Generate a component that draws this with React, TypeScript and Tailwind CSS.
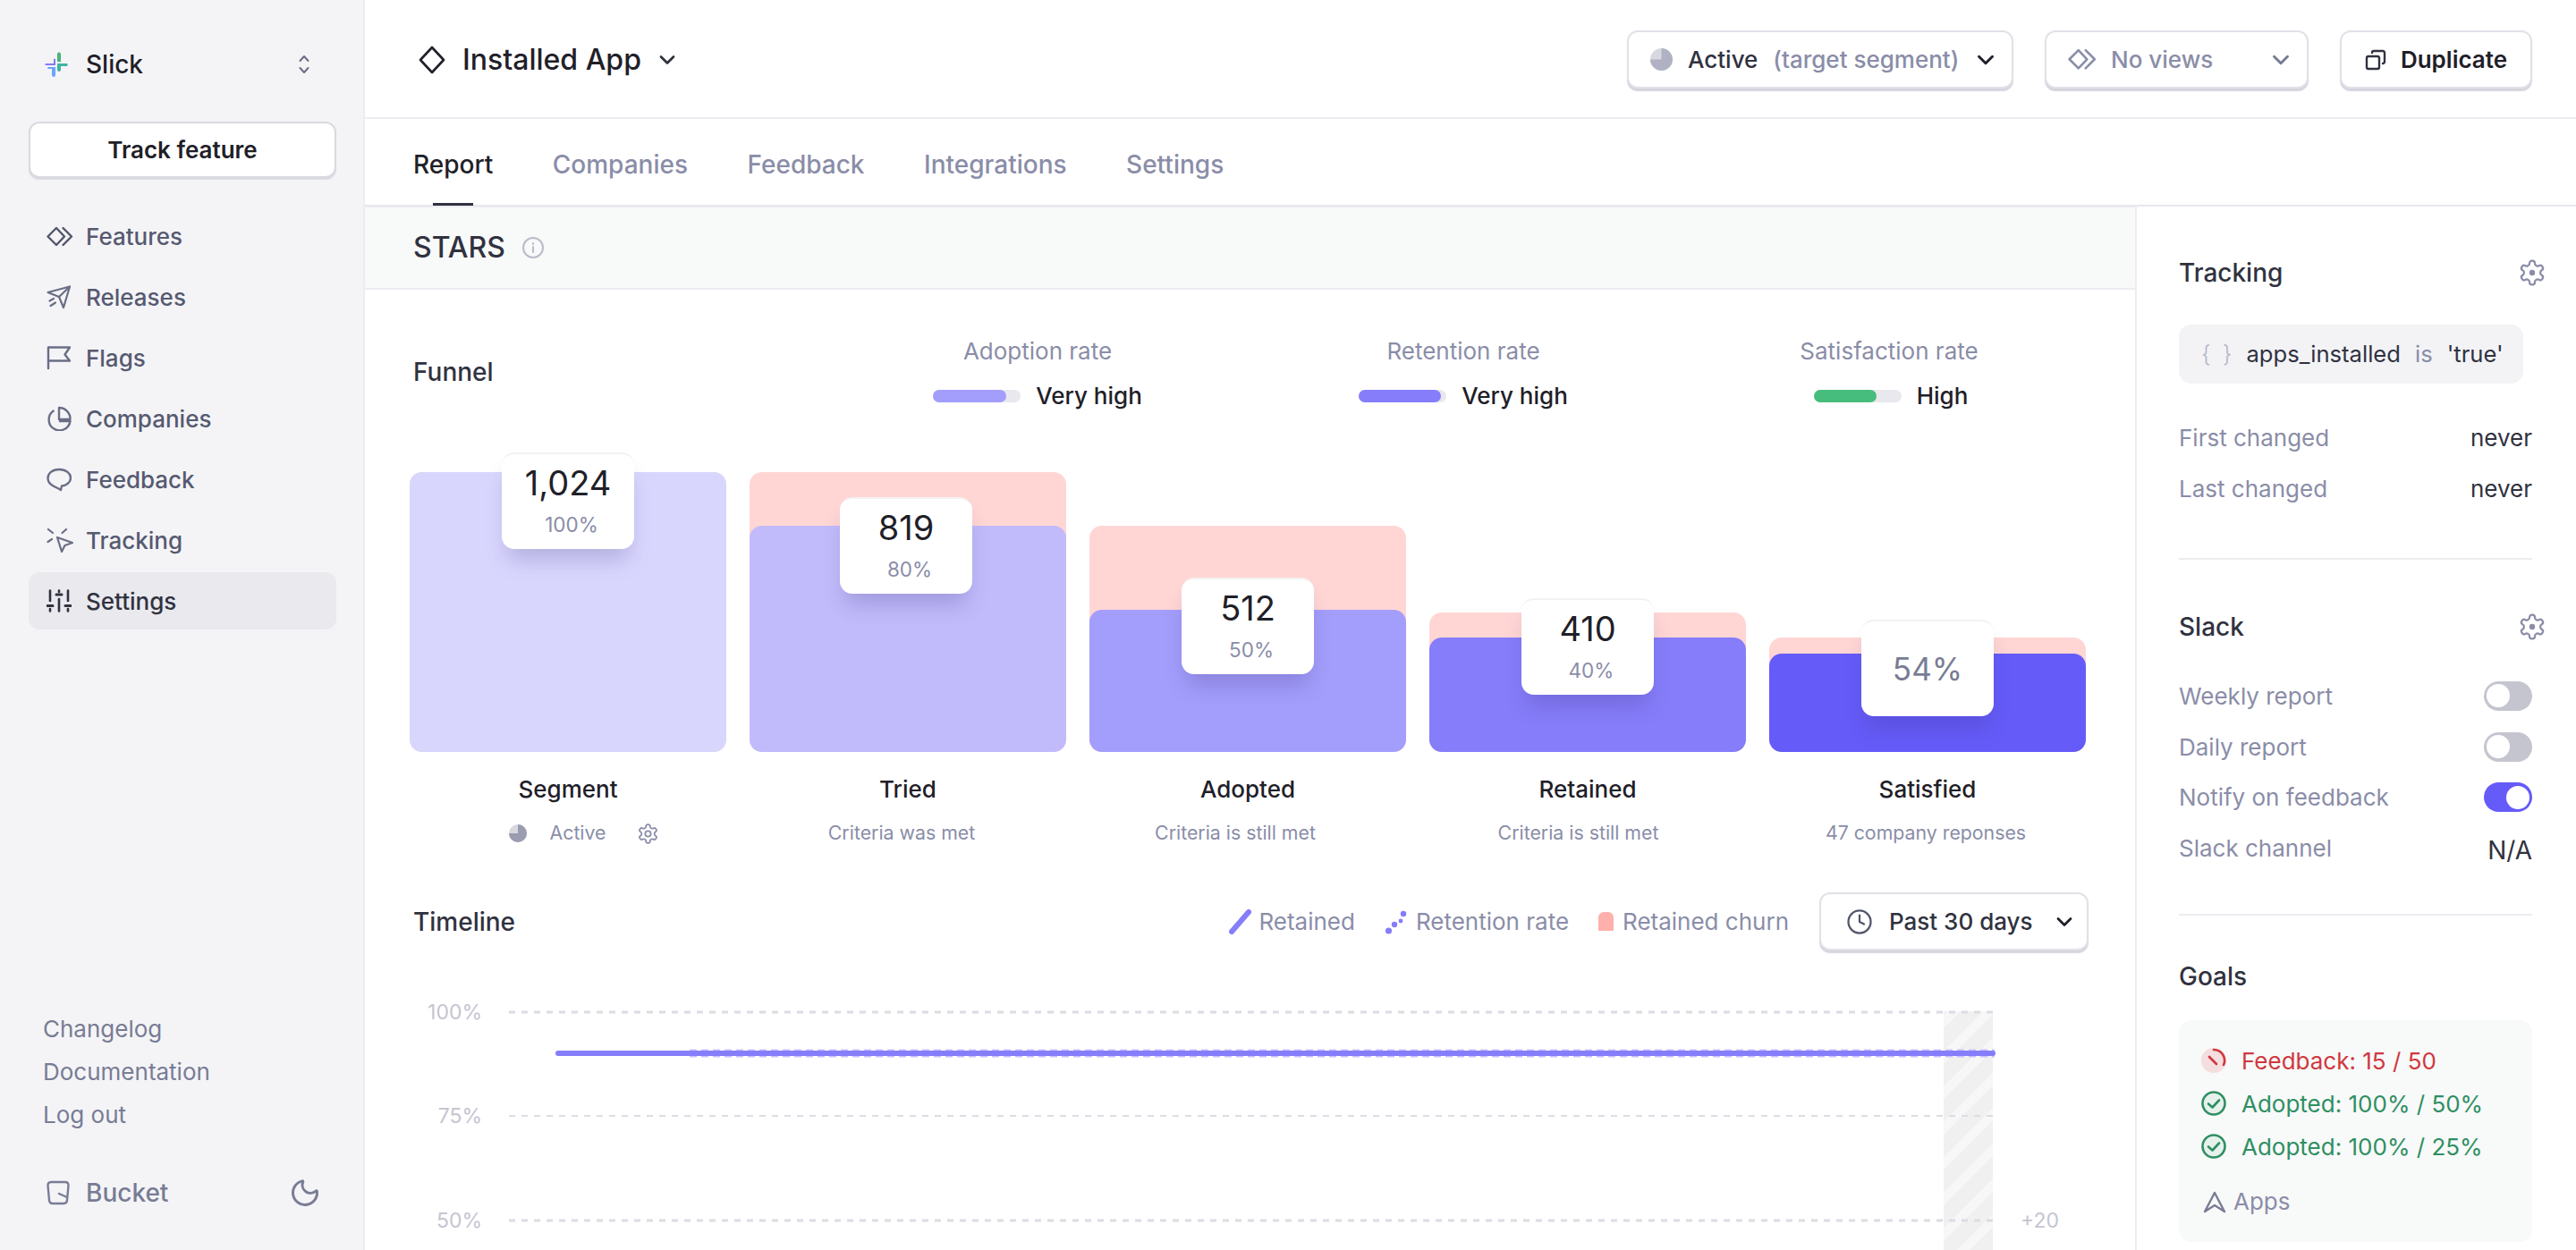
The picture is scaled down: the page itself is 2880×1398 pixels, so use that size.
import React from "react";
import { ChevronDown, Moon, Clock, Copy } from "lucide-react";

const DiamondPair = ({ c = "#52566a", w = 30, sw = 2.4 }: { c?: string; w?: number; sw?: number }) => (
  <svg width={w} height={(w * 23) / 30} viewBox="0 0 30 23" fill="none" stroke={c} strokeWidth={sw} strokeLinejoin="round" strokeLinecap="round">
    <path d="M11 2 L20 11.5 L11 21 L1.5 11.5 Z" />
    <path d="M18.5 2 L28 11.5 L18.5 21" />
  </svg>
);

const PieSmall = ({ size = 25, dark = "#b0b2c4" }: { size?: number; dark?: string }) => (
  <svg width={size} height={size} viewBox="0 0 24 24">
    <circle cx="12" cy="12" r="12" fill="#d8d8e0" />
    <path d="M12 0 A12 12 0 1 1 0 12 L12 12 Z" fill={dark} />
  </svg>
);

const GearIcon = ({ size, dot = true, className = "" }: { size: number; dot?: boolean; className?: string }) => (
  <svg width={size} height={size} viewBox="0 0 24 24" fill="none" stroke="#8a8da8" strokeWidth="1.7" strokeLinecap="round" strokeLinejoin="round" className={className}>
    <path d="M12.22 2h-.44a2 2 0 0 0-2 2v.18a2 2 0 0 1-1 1.73l-.43.25a2 2 0 0 1-2 0l-.15-.08a2 2 0 0 0-2.73.73l-.22.38a2 2 0 0 0 .73 2.73l.15.1a2 2 0 0 1 1 1.72v.51a2 2 0 0 1-1 1.74l-.15.09a2 2 0 0 0-.73 2.73l.22.38a2 2 0 0 0 2.73.73l.15-.08a2 2 0 0 1 2 0l.43.25a2 2 0 0 1 1 1.73V20a2 2 0 0 0 2 2h.44a2 2 0 0 0 2-2v-.18a2 2 0 0 1 1-1.73l.43-.25a2 2 0 0 1 2 0l.15.08a2 2 0 0 0 2.73-.73l.22-.39a2 2 0 0 0-.73-2.73l-.15-.08a2 2 0 0 1-1-1.74v-.5a2 2 0 0 1 1-1.74l.15-.09a2 2 0 0 0 .73-2.73l-.22-.38a2 2 0 0 0-2.73-.73l-.15.08a2 2 0 0 1-2 0l-.43-.25a2 2 0 0 1-1-1.73V4a2 2 0 0 0-2-2z" />
    {dot ? <circle cx="12" cy="12" r="2.4" fill="#8a8da8" stroke="none" /> : <circle cx="12" cy="12" r="3" />}
  </svg>
);

const NavIcons: Record<string, React.ReactNode> = {
  Features: <DiamondPair />,
  Releases: (
    <svg width="28" height="28" viewBox="0 0 28 28" fill="none" stroke="#6a6e85" strokeWidth="2.2" strokeLinejoin="round" strokeLinecap="round">
      <path d="M1.5 9 L26 2.5 L19 26 L14 14 Z" />
      <path d="M14 14 L26 2.5" />
      <path d="M8 16 L3.5 18.5 M10 20.5 L4.5 24" />
    </svg>
  ),
  Flags: (
    <svg width="28" height="28" viewBox="0 0 28 28" fill="none" stroke="#6a6e85" strokeWidth="2.4" strokeLinejoin="round" strokeLinecap="round">
      <path d="M2 26 V2.5 H26 L20.5 10.5 L26 17.5 H2" />
    </svg>
  ),
  Companies: (
    <svg width="28" height="28" viewBox="0 0 28 28" fill="none" stroke="#6a6e85" strokeWidth="2.4" strokeLinejoin="round">
      <path d="M8.5 5 A12 12 0 1 0 26.5 17 H14" />
      <path d="M14 2 A12.5 12.5 0 0 1 26.5 15 H14 Z" />
    </svg>
  ),
  Feedback: (
    <svg width="28" height="28" viewBox="0 0 28 28" fill="none" stroke="#6a6e85" strokeWidth="2.4" strokeLinejoin="round">
      <path d="M14 3 C22 3 27 7.5 27 12.5 C27 18 21 21.5 17 21.5 L16 26 C13 24 9 22.5 6 20.5 C3 18.5 1.5 15.5 1.5 12.5 C1.5 7.5 6.5 3 14 3 Z" />
    </svg>
  ),
  Tracking: (
    <svg width="30" height="28" viewBox="0 0 30 28" fill="none" stroke="#6a6e85" strokeWidth="2.2" strokeLinejoin="round" strokeLinecap="round">
      <path d="M12 11 L29 17 L20.5 20 L17 27 Z" />
      <path d="M2 2 L7 6 M22 2 L17.5 6 M1.5 16 L6 13" />
    </svg>
  ),
  Settings: (
    <svg width="28" height="26" viewBox="0 0 28 26" fill="none" stroke="#30323f" strokeWidth="2.6" strokeLinecap="round">
      <path d="M4 1.5 V13 M14 11 V24.5 M24 1.5 V13" />
      <path d="M1 18.5 H7 M11 6 H17 M21 18.5 H27" strokeWidth="3" />
      <path d="M4 22 V24.5 M14 1.5 V3 M24 22 V24.5" />
    </svg>
  ),
};

const Logo = () => (
  <svg width="28" height="28" viewBox="0 0 28 28" className="shrink-0">
    <path d="M2 13 H11 V8 a2 2 0 0 1 2 0 V15 H3 a1 1 0 0 1 -1 -2 Z" fill="#8578f6" />
    <path d="M10 17 H13 V26 a2 2 0 0 1 -4 0 V19 H5 a1 1 0 0 1 0 -2 Z" fill="#6aa5fb" />
    <path d="M15 2.5 a2 2 0 0 1 4 0 V11 H15 Z" fill="#45b57b" />
    <path d="M15 13 H26 a2 2 0 0 1 0 3 H19 V20 a2 2 0 0 1 -4 0 Z" fill="#3fb5a0" />
  </svg>
);

const NavItem = ({ label, active }: { label: string; active?: boolean }) => (
  <div className={`flex items-center h-[64px] my-[2px] pl-[20px] rounded-[12px] ${active ? "bg-[#e9e9ee] text-[#30323f]" : "text-[#565a70]"}`}>
    <span className="w-[44px] flex items-center">{NavIcons[label]}</span>
    <span className="text-[26px] font-medium">{label}</span>
  </div>
);

const Sidebar = () => (
  <aside className="w-[408px] shrink-0 h-full flex flex-col bg-[#f4f4f7] border-r-2 border-[#ececf1] pl-[32px] pr-[30px]">
    <div className="flex items-center h-[28px] mt-[58px] pl-[17px]">
      <Logo />
      <span className="ml-[19px] text-[28px] font-medium text-[#1f2028]">Slick</span>
      <svg width="12" height="22" viewBox="0 0 12 22" fill="none" stroke="#6a6e85" strokeWidth="2" strokeLinecap="round" strokeLinejoin="round" className="ml-[174px]">
        <path d="M1.5 7 L6 2 L10.5 7 M1.5 15 L6 20 L10.5 15" />
      </svg>
    </div>
    <button className="mt-[50px] h-[63px] w-[344px] rounded-[12px] bg-white border-2 border-[#d9d9e1] shadow-[0_2px_1px_#d9d9e1] text-[26px] font-semibold text-[#1f2028]">
      Track feature
    </button>
    <nav className="mt-[31px] flex flex-col">
      {["Features", "Releases", "Flags", "Companies", "Feedback", "Tracking"].map((l) => (
        <NavItem key={l} label={l} />
      ))}
      <NavItem label="Settings" active />
    </nav>
    <div className="mt-auto flex flex-col gap-[12px] pl-[16px] text-[26px] text-[#787c94] leading-[36px]">
      <span>Changelog</span>
      <span>Documentation</span>
      <span>Log out</span>
    </div>
    <div className="mt-[48px] mb-[43px] flex items-center pl-[20px] pr-[17px] text-[#787c94]">
      <svg width="26" height="28" viewBox="0 0 26 28" fill="none" stroke="#787c94" strokeWidth="2.4" strokeLinejoin="round" strokeLinecap="round">
        <path d="M5 2 H21 C23.5 2 24.5 3.5 24.5 6 L23 22 C23 25 21.5 26 19 26 H7 C4.5 26 3 25 3 22 L1.5 6 C1.5 3.5 2.5 2 5 2 Z" />
        <path d="M14 15 L23 19" />
      </svg>
      <span className="ml-[18px] text-[28px] font-medium">Bucket</span>
      <Moon size={36} strokeWidth={2} color="#787c94" className="ml-auto -scale-x-100 rotate-[80deg]" />
    </div>
  </aside>
);

const SelectBtn = ({ w, children, gray }: { w: number; children: React.ReactNode; gray?: boolean }) => (
  <div style={{ width: w }} className="h-[65px] flex items-center rounded-[12px] bg-white border-2 border-[#e1e1e8] shadow-[0_3px_1px_#d5d5de] px-[24px]">
    {children}
    <ChevronDown size={30} strokeWidth={2.4} color={gray ? "#787c94" : "#1f2028"} className="ml-auto -mr-[10px]" />
  </div>
);

const Header = () => (
  <header className="h-[133px] shrink-0 flex items-center border-b-2 border-[#ececf1] pl-[60px] pr-[49px] pt-[2px]">
    <svg width="30" height="32" viewBox="0 0 30 32" fill="none" stroke="#1f2028" strokeWidth="2.6" strokeLinejoin="round">
      <path d="M15 2 L28 16 L15 30 L2 16 Z" />
    </svg>
    <span className="ml-[19px] text-[32px] font-medium text-[#1f2028] leading-none">Installed App</span>
    <ChevronDown size={28} strokeWidth={2.4} color="#30323f" className="ml-[15px]" />
    <div className="ml-auto flex items-center gap-[35px]">
      <SelectBtn w={432}>
        <PieSmall />
        <span className="ml-[17px] text-[26px] font-medium text-[#30323f]">Active</span>
        <span className="ml-[17px] text-[26px] font-medium text-[#8a8da8]">(target segment)</span>
      </SelectBtn>
      <SelectBtn w={295} gray>
        <DiamondPair c="#8a8da8" w={32} />
        <span className="ml-[16px] text-[26px] font-medium text-[#8a8da8]">No views</span>
      </SelectBtn>
      <div className="h-[65px] w-[215px] flex items-center justify-center gap-[16px] rounded-[12px] bg-white border-2 border-[#e1e1e8] shadow-[0_3px_1px_#d5d5de]">
        <Copy size={24} strokeWidth={2.4} color="#30323f" className="-scale-x-100" />
        <span className="text-[26px] font-semibold text-[#1f2028]">Duplicate</span>
      </div>
    </div>
  </header>
);

const Tabs = () => (
  <div className="h-[98px] shrink-0 flex items-center gap-[66.5px] border-b-2 border-[#e8e8ee] pl-[54px]">
    {["Report", "Companies", "Feedback", "Integrations", "Settings"].map((t, i) => (
      <div key={t} className="relative h-full flex items-center pt-[5px]">
        <span className={`text-[28px] font-medium ${i === 0 ? "text-[#1f2028]" : "text-[#8a8da8]"}`}>{t}</span>
        {i === 0 && <div className="absolute bottom-[-1px] left-[22px] w-[45px] h-[3px] bg-[#30323f]" />}
      </div>
    ))}
  </div>
);

const Rate = ({ title, label, color, fill, shift = 0 }: { title: string; label: string; color: string; fill: number; shift?: number }) => (
  <div className="flex flex-col items-center">
    <span className="text-[26px] font-normal text-[#8a8da8] leading-[36px]">{title}</span>
    <div className="mt-[14px] flex items-center gap-[17px]" style={{ marginLeft: shift }}>
      <div className="relative w-[98px] h-[14px] rounded-full bg-[#e8e8ee]">
        <div className="h-full rounded-full" style={{ width: fill, background: color }} />
      </div>
      <span className="text-[26px] font-medium text-[#1f2028] leading-[36px]">{label}</span>
    </div>
  </div>
);

type Bar = { name: string; sub: React.ReactNode; top: number; inner: number; color: string; cardTop: number; cardLeft: number; subShift: number; value?: string; pct: string };
const bars: Bar[] = [
  { name: "Segment", top: 528, inner: 528, color: "#d9d6fe", cardTop: 506, cardLeft: 103, subShift: 36, value: "1,024", pct: "100%", sub: null },
  { name: "Tried", top: 528, inner: 588, color: "#c1bbfb", cardTop: 556, cardLeft: 101, subShift: -14, value: "819", pct: "80%", sub: "Criteria was met" },
  { name: "Adopted", top: 588, inner: 682, color: "#a39dfb", cardTop: 646, cardLeft: 103, subShift: -28, value: "512", pct: "50%", sub: "Criteria is still met" },
  { name: "Retained", top: 685, inner: 713, color: "#867dfa", cardTop: 669, cardLeft: 103, subShift: -21, value: "410", pct: "40%", sub: "Criteria is still met" },
  { name: "Satisfied", top: 713, inner: 731, color: "#655bf8", cardTop: 693, cardLeft: 103, subShift: -4, pct: "54%", sub: "47 company reponses" },
];

const FunnelBar = ({ b }: { b: Bar }) => (
  <div className="w-[354px] flex flex-col items-center">
    <div className="relative w-full h-[313px]">
      <div className="absolute left-0 right-0 bottom-0 rounded-[14px] bg-[#ffd6d4]" style={{ top: b.top - 528 }} />
      <div className="absolute left-0 right-0 bottom-0 rounded-[14px]" style={{ top: b.inner - 528, background: b.color }} />
      <div
        className="absolute w-[148px] h-[108px] rounded-[14px] bg-white border-t-2 border-[#f3f1f1] shadow-[0_18px_24px_-6px_rgba(50,40,120,0.22)] flex flex-col items-center justify-center"
        style={{ top: b.cardTop - 528, left: b.cardLeft }}
      >
        {b.value ? (
          <>
            <span className="text-[38px] leading-[46px] text-[#1f2028]">{b.value}</span>
            <span className="mt-[8px] pb-[3px] text-[22.5px] leading-[32px] text-[#8a8da8] pl-[8px]">{b.pct}</span>
          </>
        ) : (
          <span className="text-[35px] text-[#787c94]">{b.pct}</span>
        )}
      </div>
    </div>
    <span className="mt-[24px] text-[26px] leading-[36px] font-medium text-[#1f2028]">{b.name}</span>
    <div className="mt-[15px] h-[32px] flex items-center text-[21.3px] text-[#8a8da8]" style={{ marginLeft: b.subShift }}>
      {b.sub ?? (
        <>
          <PieSmall size={20} dark="#9a9cb0" />
          <span className="ml-[26px]">Active</span>
          <GearIcon size={25} dot={false} className="ml-[35px]" />
        </>
      )}
    </div>
  </div>
);

const Legend = () => (
  <div className="flex items-center text-[26px] text-[#8a8da8]">
    <svg width="28" height="28" viewBox="0 0 28 28" className="mr-[7px]">
      <path d="M5 25 L24 3" stroke="#867dfa" strokeWidth="6" strokeLinecap="round" />
    </svg>
    <span>Retained</span>
    <svg width="28" height="28" viewBox="0 0 28 28" className="ml-[33px] mr-[7px]" fill="#867dfa">
      <circle cx="4.5" cy="24" r="3.6" />
      <circle cx="11" cy="17" r="3.2" />
      <circle cx="18" cy="13" r="2.4" />
      <circle cx="21" cy="5" r="3.2" />
    </svg>
    <span>Retention rate</span>
    <div className="ml-[33px] mr-[10px] w-[17px] h-[21px] rounded-t-[6px] bg-[#ffb0ad]" />
    <span>Retained churn</span>
  </div>
);

const AxisLabel = ({ children, top, right }: { children: React.ReactNode; top: number; right: number }) => (
  <span className="absolute text-[23px] leading-[30px] text-[#c5c5d0]" style={{ top, right }}>
    {children}
  </span>
);

const Chart = () => (
  <div className="relative w-[1979px] h-[300px]">
    <svg width="1979" height="300" viewBox="0 0 1979 300" className="block">
      <defs>
        <pattern id="hatch" width="28" height="28" patternUnits="userSpaceOnUse" patternTransform="rotate(45)">
          <rect width="28" height="28" fill="#f0f0f0" />
          <rect width="10" height="28" fill="#f7f7f7" />
        </pattern>
      </defs>
      <rect x="1765" y="12" width="55" height="288" fill="url(#hatch)" />
      <g stroke="#dcdce4" strokeDasharray="7 7">
        <line x1="161" x2="1820" y1="13" y2="13" strokeWidth="3" />
        <line x1="161" x2="1820" y1="129" y2="129" strokeWidth="2" />
        <line x1="161" x2="1820" y1="246" y2="246" strokeWidth="3" />
      </g>
      <line x1="363" x2="1822" y1="56" y2="56" stroke="#c5c1fc" strokeWidth="3" strokeDasharray="8 5" />
      <line x1="363" x2="1822" y1="62" y2="62" stroke="#c5c1fc" strokeWidth="3" strokeDasharray="8 5" />
      <line x1="216" x2="1820" y1="59" y2="59" stroke="#867dfa" strokeWidth="6" strokeLinecap="round" />
    </svg>
    <AxisLabel top={-2} right={1848}>100%</AxisLabel>
    <AxisLabel top={114} right={1848}>75%</AxisLabel>
    <AxisLabel top={231} right={1848}>50%</AxisLabel>
    <AxisLabel top={231} right={85}>+20</AxisLabel>
  </div>
);

const MainReport = () => (
  <section className="flex-1 min-w-0 overflow-hidden">
    <div className="h-[93px] flex items-center gap-[18px] bg-[#f8f9f9] border-b-2 border-[#ececf1] pl-[54px] border-t">
      <span className="text-[32px] font-medium text-[#30323f]">STARS</span>
      <svg width="26" height="26" viewBox="0 0 26 26" fill="none" stroke="#b9bbcb" strokeWidth="2">
        <circle cx="13" cy="13" r="11" />
        <path d="M13 12 V18 M13 8 V9" strokeLinecap="round" />
      </svg>
    </div>
    <div className="mt-[50px] pl-[54px] flex items-center h-[84px]">
      <span className="w-[460px] shrink-0 text-[28px] font-medium text-[#30323f]">Funnel</span>
      <div className="mt-[3px] grid grid-cols-[476px_476px_476px]">
        <Rate title="Adoption rate" label="Very high" color="#a39dfb" fill={82} />
        <Rate title="Retention rate" label="Very high" color="#867dfa" fill={92} />
        <Rate title="Satisfaction rate" label="High" color="#47bd7d" fill={70} shift={4} />
      </div>
    </div>
    <div className="mt-[70px] pl-[50px] flex gap-[26px]">
      {bars.map((b) => (
        <FunnelBar key={b.name} b={b} />
      ))}
    </div>
    <div className="mt-[50px] pl-[54px] pr-[52px] flex items-center h-[65px]">
      <span className="text-[28px] font-medium text-[#30323f]">Timeline</span>
      <div className="ml-auto flex items-center gap-[34px]">
        <Legend />
        <div className="w-[301px] h-[65px] flex items-center rounded-[12px] bg-white border-2 border-[#e1e1e8] shadow-[0_3px_1px_#d5d5de] pl-[28px]">
          <Clock size={30} strokeWidth={1.8} color="#52566a" />
          <span className="ml-[18px] text-[26px] font-medium text-[#30323f]">Past 30 days</span>
          <ChevronDown size={28} strokeWidth={2.4} color="#1f2028" className="ml-auto mr-[11px]" />
        </div>
      </div>
    </div>
    <div className="mt-[56px]">
      <Chart />
    </div>
  </section>
);

const Toggle = ({ on }: { on?: boolean }) => (
  <div className={`w-[54px] h-[33px] rounded-full flex items-center px-[3px] ${on ? "bg-[#655bf8] justify-end" : "bg-[#c5c5d0]"}`}>
    <div className="w-[26px] h-[26px] rounded-full bg-white" />
  </div>
);

const Row = ({ label, children, h }: { label: string; children: React.ReactNode; h: number }) => (
  <div className="flex items-center justify-between" style={{ height: h }}>
    <span className="text-[26px] text-[#8a8da8]">{label}</span>
    {children}
  </div>
);

const PanelTitle = ({ t, gear }: { t: string; gear?: boolean }) => (
  <div className="flex items-center justify-between h-[36px]">
    <span className="text-[28px] font-medium text-[#30323f]">{t}</span>
    {gear && <GearIcon size={32} className="-mr-[16px]" />}
  </div>
);

const Goal = ({ children, red }: { children: React.ReactNode; red?: boolean }) => (
  <div className={`flex items-center h-[48px] text-[26px] ${red ? "text-[#d0383e]" : "text-[#2f8f62]"}`}>
    {red ? (
      <svg width="28" height="28" viewBox="0 0 28 28" fill="none" strokeLinecap="round" strokeWidth="2.6" stroke="#d0383e">
        <circle cx="14" cy="14" r="14" fill="#f5dedf" stroke="none" />
        <path d="M14 2 A12 12 0 0 1 25 19" />
        <path d="M9 10 L17 18" />
      </svg>
    ) : (
      <svg width="28" height="28" viewBox="0 0 28 28" fill="#e6f1ec" strokeLinecap="round" strokeLinejoin="round" strokeWidth="2.6" stroke="#2f8f62">
        <circle cx="14" cy="14" r="12.5" />
        <path d="M8 14.5 L12.5 18.5 L20 10.5" fill="none" />
      </svg>
    )}
    <span className="ml-[17px]">{children}</span>
  </div>
);

const RightPanel = () => (
  <aside className="w-[493px] shrink-0 border-l-2 border-[#ececf1] pl-[47px] pr-[49px] -mt-[2px] overflow-hidden">
    <div className="mt-[58px]">
      <PanelTitle t="Tracking" gear />
    </div>
    <div className="mt-[40px] w-[385px] h-[66px] rounded-[14px] bg-[#f3f3f6] flex items-center pl-[25px] text-[25.6px] text-[#30323f]">
      <span className="text-[#b4b6c6] tracking-[3px] font-light">{"{ }"}</span>
      <span className="ml-[13px]">apps_installed</span>
      <span className="ml-[16px] text-[#8a8da8]">is</span>
      <span className="ml-[16px]">'true'</span>
    </div>
    <div className="mt-[42px] flex flex-col gap-[21px]">
      <Row label="First changed" h={36}><span className="text-[26px] text-[#30323f]">never</span></Row>
      <Row label="Last changed" h={36}><span className="text-[26px] text-[#30323f]">never</span></Row>
    </div>
    <div className="mt-[60px] h-[2px] bg-[#ececf1]" />
    <div className="mt-[57px]">
      <PanelTitle t="Slack" gear />
    </div>
    <div className="mt-[30px] flex flex-col">
      <Row label="Weekly report" h={58}><Toggle /></Row>
      <Row label="Daily report" h={56}><Toggle /></Row>
      <Row label="Notify on feedback" h={57}><Toggle on /></Row>
      <Row label="Slack channel" h={57}><span className="text-[28px] text-[#30323f] mt-[4px]">N/A</span></Row>
    </div>
    <div className="mt-[45px] h-[2px] bg-[#ececf1]" />
    <div className="mt-[50px]">
      <PanelTitle t="Goals" />
    </div>
    <div className="mt-[31px] h-[248px] rounded-[14px] bg-[#f8f9f9] pl-[25px] pt-[21px]">
      <Goal red>Feedback: 15 / 50</Goal>
      <Goal>Adopted: 100% / 50%</Goal>
      <Goal>Adopted: 100% / 25%</Goal>
      <div className="mt-[18px] flex items-center text-[26px] text-[#8a8da8]">
        <svg width="26" height="26" viewBox="0 0 26 26" fill="none" stroke="#787c94" strokeWidth="2.4" strokeLinejoin="round" strokeLinecap="round" className="ml-[2px]">
          <path d="M13 3 L2 24 L13 17 L24 24 Z" />
        </svg>
        <span className="ml-[8px]">Apps</span>
      </div>
    </div>
  </aside>
);

export default function App() {
  return (
    <div className="w-[2880px] h-[1398px] flex overflow-hidden bg-white font-[Inter,sans-serif]">
      <Sidebar />
      <main className="flex-1 min-w-0 flex flex-col">
        <Header />
        <Tabs />
        <div className="flex-1 min-h-0 flex">
          <MainReport />
          <RightPanel />
        </div>
      </main>
    </div>
  );
}
